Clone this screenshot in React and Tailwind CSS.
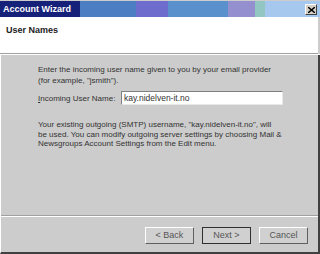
export default function App() {
    const font = { fontFamily: '"Liberation Sans", Arial, sans-serif' }

    return (
        <div className="w-[320px] h-[254px] overflow-hidden bg-[#cccccc] flex flex-col text-[#222]" style={font}>
            {/* Title bar */}
            <div className="h-[16px] mt-px flex relative">
                <div className="w-[80px] bg-[#16227a]" />
                <div className="w-[56px] bg-[#4c7ec4]" />
                <div className="w-[32px] bg-[#6e6ccc]" />
                <div className="w-[60px] bg-[#5a90cc]" />
                <div className="w-[27px] bg-[#9490cf]" />
                <div className="w-[10px] bg-[#92c6c2]" />
                <div className="flex-1 bg-[#a6c8ee]" />
                <span className="absolute left-[3px] top-[2px] text-[9px] font-bold text-white leading-[12px]">
                    Account Wizard
                </span>
                <div className="absolute left-[305px] top-[3px] w-[12px] h-[11px] bg-[#d4d0c8] border border-t-white border-l-white border-r-[#404040] border-b-[#404040] flex items-center justify-center">
                    <svg width="7" height="6" viewBox="0 0 7 6">
                        <path d="M0 0 L7 6 M7 0 L0 6" stroke="#000" strokeWidth="1.4" />
                    </svg>
                </div>
            </div>

            {/* Header */}
            <div className="h-[37px] bg-white border-b border-[#a0a0a0] pl-[6px] pt-[7px] mr-[2px]">
                <p className="text-[9px] font-bold leading-[12px]">User Names</p>
            </div>
            <div className="h-px bg-white" />

            {/* Body */}
            <div className="flex-1 flex border-l border-white border-r-2 border-r-[#404040] border-b-2 border-b-[#404040]">
                <div className="flex-1 flex flex-col">
                    <div className="flex-1 pl-[37px] pr-[10px] pt-[9px] text-[8px] leading-[11px] text-[#333]">
                        <p>Enter the incoming user name given to you by your email provider</p>
                        <p>(for example, "jsmith").</p>

                        <div className="flex items-center mt-[5px]">
                            <span className="w-[83px]"><span className="underline">I</span>ncoming User Name:</span>
                            <div className="w-[162px] h-[14px] bg-white border border-t-[#808080] border-l-[#808080] border-r-[#e8e8e8] border-b-[#e8e8e8] px-[2px] text-[8.5px] leading-[12px]">
                                kay.nidelven-it.no
                            </div>
                        </div>

                        <div className="mt-[15px] leading-[9.5px]">
                            <p>Your existing outgoing (SMTP) username, "kay.nidelven-it.no", will</p>
                            <p>be used. You can modify outgoing server settings by choosing Mail &amp;</p>
                            <p>Newsgroups Account Settings from the Edit menu.</p>
                        </div>
                    </div>

                    <div className="h-[2px] border-t border-[#a0a0a0] border-b border-b-white" />

                    <div className="h-[35px] flex justify-end gap-[8px] pr-[10px] pt-[10px] text-[9px] text-[#555]">
                        <button className="w-[49px] h-[17px] bg-[#d0d0d0] border border-t-white border-l-white border-r-[#606060] border-b-[#606060]">
                            &lt; Back
                        </button>
                        <button className="w-[49px] h-[17px] bg-[#d0d0d0] border border-[#303030]">
                            Next &gt;
                        </button>
                        <button className="w-[49px] h-[17px] bg-[#d0d0d0] border border-t-white border-l-white border-r-[#606060] border-b-[#606060]">
                            Cancel
                        </button>
                    </div>
                </div>
            </div>
        </div>
    )
}
